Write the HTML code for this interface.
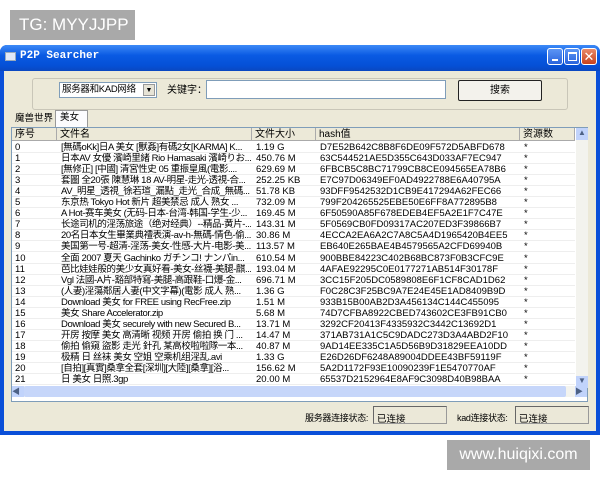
<!DOCTYPE html>
<html><head><meta charset="utf-8"><style>
*{margin:0;padding:0;box-sizing:border-box}
body{width:600px;height:480px;background:#fff;position:relative;overflow:hidden;font-family:"Liberation Sans","Noto Sans CJK SC",sans-serif;font-size:10px;color:#000}
.abs{position:absolute;white-space:nowrap}
.tg{left:10px;top:10px;width:125px;height:30px;background:#a9a9a9;color:#fff;font-size:17px;line-height:30px;padding-left:9px}
.www{left:447px;top:440px;width:143px;height:30px;background:#a9a9a9;color:#fff;font-size:16px;line-height:30px;text-align:center}
.win{left:0;top:45px;width:600px;height:390px;background:#0a4fd8;border-radius:7px 7px 0 0}
.title{left:0;top:45px;width:600px;height:26px;border-radius:7px 7px 0 0;background:linear-gradient(#3d8af7,#0a5ae3 40%,#0550d6 80%,#0a47c0)}
.ttext{left:20px;top:50px;color:#fff;font-family:"Liberation Mono",monospace;font-weight:bold;font-size:11px}
.ticon{left:5px;top:52px;width:11px;height:9px;background:#dfe8f8;border:1px solid #9ab}
.tb{top:48px;width:16px;height:17px;border:1px solid #fff;border-radius:3px;background:linear-gradient(#5c95f5,#2a63dc)}
.body{left:4px;top:71px;width:592px;height:360px;background:#ece9d8}
.grp{left:32px;top:78px;width:536px;height:32px;border:1px solid #c9c6b8;border-radius:3px}
.sel{left:59px;top:82px;width:98px;height:16px;background:#fff;border:1px solid #7f9db9;padding-left:2px;line-height:14px;font-size:9.5px;letter-spacing:-0.3px}
.selb{left:143px;top:84px;width:12px;height:12px;background:#e6e3d6;border:1px solid #999;font-size:7px;text-align:center;line-height:11px}
.inp{left:206px;top:80px;width:240px;height:19px;background:#fff;border:1px solid #7f9db9}
.btn{left:458px;top:80px;width:84px;height:21px;border:1px solid #222;background:#f3f2ec;text-align:center;line-height:19px;border-radius:2px}
.tab{top:112px;height:15px;line-height:14px;font-size:9.5px}
.list{left:11px;top:127px;width:577px;height:275px;background:#fff;border:1px solid #7f9db9}
.hdr{left:12px;top:128px;width:563px;height:13px;background:#ece9d8;border-bottom:1px solid #aaa}
.hc{position:absolute;top:0;height:13px;line-height:13px;padding-left:3px;border-right:1px solid #aaa}
.row{position:absolute;left:12px;width:563px;height:11px;line-height:11px;font-size:9.5px;border-bottom:1px solid #eee;white-space:nowrap}
.row span{position:absolute;top:0;overflow:hidden}
.fn{letter-spacing:-0.4px}
.vs{left:576px;top:128px;width:12px;height:260px;background:#f3f3ee}
.hs{left:12px;top:386px;width:575px;height:11px;background:#f3f3ee}
.st{top:411px;line-height:14px;font-size:9px;letter-spacing:-0.3px}
.sb{top:406px;width:74px;height:18px;border:1px solid #999;border-top-color:#666;border-left-color:#666;background:#ebe8d8;padding:4px 0 0 3px;font-size:9.5px}
</style></head><body>
<div class="abs tg">TG: MYYJJPP</div>
<div class="abs win"></div>
<div class="abs title"></div>
<div class="abs ticon"></div>
<div class="abs ttext">P2P Searcher</div>
<div class="abs tb" style="left:547px"><div style="position:absolute;left:4px;top:10px;width:6px;height:2px;background:#fff"></div></div>
<div class="abs tb" style="left:564px"><div style="position:absolute;left:3px;top:3px;width:9px;height:9px;border:1px solid #fff;border-top-width:2px"></div></div>
<div class="abs tb" style="left:581px;background:linear-gradient(#e88a6a,#c9421c);color:#fff;font-size:13px;text-align:center;line-height:15px">✕</div>
<div class="abs body"></div>
<div class="abs grp"></div>
<div class="abs sel">服务器和KAD网络</div>
<div class="abs selb">▼</div>
<div class="abs" style="left:167px;top:81px">关键字：</div>
<div class="abs inp"></div>
<div class="abs btn">搜索</div>
<div class="abs tab" style="left:15px">魔兽世界</div>
<div class="abs tab" style="left:55px;top:110px;width:33px;height:18px;background:#fcfcfe;border:1px solid #999;border-bottom:none;padding-left:4px">美女</div>
<div class="abs list"></div>
<div class="abs hdr">
<div class="hc" style="left:0;width:45px">序号</div>
<div class="hc" style="left:45px;width:195px">文件名</div>
<div class="hc" style="left:240px;width:64px">文件大小</div>
<div class="hc" style="left:304px;width:204px">hash值</div>
<div class="hc" style="left:508px;width:55px">资源数</div>
</div>
<div id="rows"></div>
<div class="abs vs"><div style="position:absolute;left:0;top:0;width:12px;height:12px;background:#c1d3fb;font-size:8px;text-align:center;color:#4d6185">▲</div><div style="position:absolute;left:0;top:248px;width:12px;height:12px;background:#c1d3fb;font-size:8px;text-align:center;color:#4d6185">▼</div></div>
<div class="abs hs"><div style="position:absolute;left:0;top:0;width:12px;height:11px;background:#c1d3fb;font-size:8px;color:#4d6185">◀</div><div style="position:absolute;left:12px;top:0;width:542px;height:11px;background:#c6d6fa;border-radius:2px"></div><div style="position:absolute;left:563px;top:0;width:12px;height:11px;background:#c1d3fb;font-size:8px;color:#4d6185">▶</div></div>
<div class="abs st" style="left:305px">服务器连接状态:</div>
<div class="abs sb" style="left:373px">已连接</div>
<div class="abs st" style="left:457px">kad连接状态:</div>
<div class="abs sb" style="left:515px">已连接</div>
<div class="abs www">www.huiqixi.com</div>
<script>
var d=[["[無碼oKk]日A 美女 [獸姦]有碼2女[KARMA] K...","1.19 G","D7E52B642C8B8F6DE09F572D5ABFD678"],
["日本AV 女優 濱崎里緒 Rio Hamasaki 濱崎りお...","450.76 M","63C544521AE5D355C643D033AF7EC947"],
["[無修正] [中國] 清宮性史 05 重振皇風(電影....","629.69 M","6FBCB5C8BC71799CB8CE094565EA78B6"],
["套圖 全20張 陳慧琳 18 AV-明星-走光-透視-合...","252.25 KB","E7C97D06349EF0AD4922788E6A40795A"],
["AV_明星_透視_徐若瑄_漏點_走光_合成_無碼...","51.78 KB","93DFF9542532D1CB9E417294A62FEC66"],
["东京热 Tokyo Hot 新片 超美禁忌 成人 熟女 ...","732.09 M","799F204265525EBE50E6FF8A772895B8"],
["A Hot-赛车美女 (无码-日本-台湾-韩国-学生-少...","169.45 M","6F50590A85F678EDEB4EF5A2E1F7C47E"],
["长途司机的淫荡旅途（绝对经典）--精品-黄片-...","143.31 M","5F0569CB0FD09317AC207ED3F39866B7"],
["20名日本女生畢業典禮表演-av-h-無碼-情色-偷...","30.86 M","4ECCA2EA6A2C7A8C5A4D1965420B4EE5"],
["美国第一号-超清-淫荡-美女-性感-大片-电影-美...","113.57 M","EB640E265BAE4B4579565A2CFD69940B"],
["全面 2007 夏天 Gachinko ガチンコ! ナンパin...","610.54 M","900BBE84223C402B68BC873F0B3CFC9E"],
["芭比娃娃般的美少女真好看-美女-丝襪-美腿-麒...","193.04 M","4AFAE92295C0E0177271AB514F30178F"],
["Vgl 法國-A片-豁部特寫-美腿-高跟鞋-口爆-金...","696.71 M","3CC15F205DC0589808E6F1CF8CAD1D62"],
["(人妻)淫蕩鄰居人妻(中文字幕)(電影 成人 熟...","1.36 G","F0C28C3F25BC9A7E24E45E1AD8409B9D"],
["Download 美女 for FREE using RecFree.zip","1.51 M","933B15B00AB2D3A456134C144C455095"],
["美女 Share Accelerator.zip","5.68 M","74D7CFBA8922CBED743602CE3FB91CB0"],
["Download 美女 securely with new Secured B...","13.71 M","3292CF20413F4335932C3442C13692D1"],
["开房 按摩 美女 高清晰 视频 开房 偷拍 换 门 ...","14.47 M","371AB731A1C5C9DADC273D3A4ABD2F10"],
["偷拍 偷窺 盜影 走光 針孔 某高校啦啦隊一本...","40.87 M","9AD14EE335C1A5D56B9D31829EEA10DD"],
["极精 日 丝袜 美女 空姐 空乘机组淫乱.avi","1.33 G","E26D26DF6248A89004DDEE43BF59119F"],
["[自拍][真實]桑拿全套[深圳][大陸][桑拿][浴...","156.62 M","5A2D1172F93E10090239F1E5470770AF"],
["日 美女 日照.3gp","20.00 M","65537D2152964E8AF9C3098D40B98BAA"]];
var h="";for(var i=0;i<d.length;i++){var t=142+i*11.05;
h+='<div class="row" style="top:'+t+'px"><span style="left:3px">'+i+'</span><span class="fn" style="left:49px;width:190px">'+d[i][0]+'</span><span style="left:244px">'+d[i][1]+'</span><span style="left:308px">'+d[i][2]+'</span><span style="left:512px">*</span></div>';}
document.getElementById("rows").innerHTML=h;
</script>
</body></html>
